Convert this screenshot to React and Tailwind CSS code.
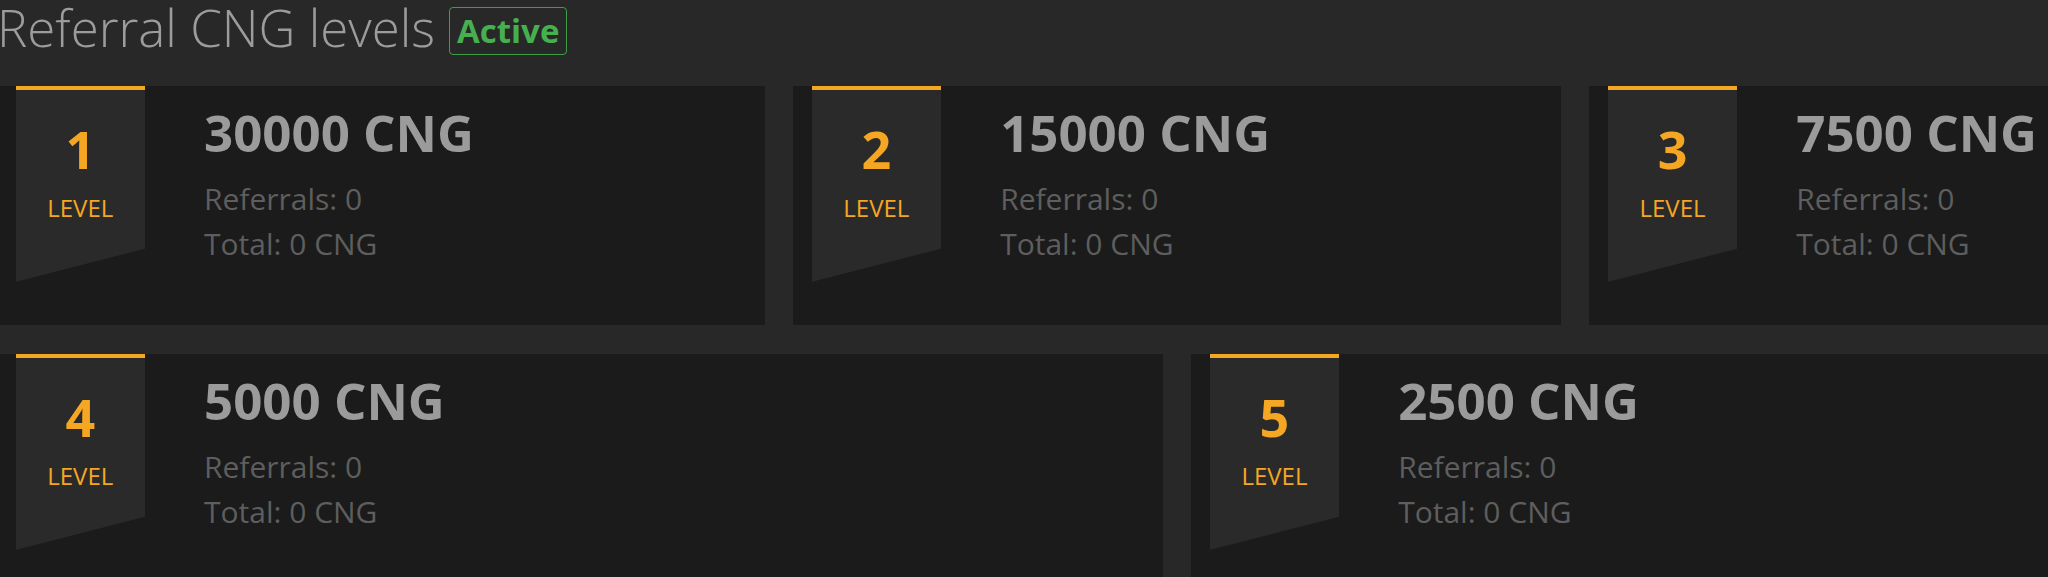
import React from 'react'

const levels = [
  { level: 1, amount: '30000 CNG', span: 'col-span-2' },
  { level: 2, amount: '15000 CNG', span: 'col-span-2' },
  { level: 3, amount: '7500 CNG', span: 'col-span-2' },
  { level: 4, amount: '5000 CNG', span: 'col-span-3' },
  { level: 5, amount: '2500 CNG', span: 'col-span-3' },
]

function LevelCard({ level, amount, span }) {
  return (
    <section className={`${span} h-[239px] bg-[#1b1b1b] flex pl-[18.5px]`}>
      <div className="w-[129.5px] h-[196px] shrink-0 bg-[#2a2a2a] border-t-4 border-[#f5a623] flex flex-col items-center pt-[33px] [clip-path:polygon(0_0,100%_0,100%_83%,0_100%)]">
        <span className="text-[52px] leading-[52px] font-bold text-[#f5a623]">{level}</span>
        <span className="mt-[21px] text-[24px] leading-[24px] text-[#f5a623]">LEVEL</span>
      </div>
      <div className="ml-[59px] pt-[21px]">
        <h3 className="text-[51px] leading-[51px] font-bold text-[#9b9b9b] whitespace-nowrap">{amount}</h3>
        <div className="mt-[18px] text-[30px] leading-[45px] text-[#5e5e5e] whitespace-nowrap">
          <p>Referrals: 0</p>
          <p>Total: 0 CNG</p>
        </div>
      </div>
    </section>
  )
}

export default function App() {
  return (
    <div className="w-full h-[577px] overflow-hidden bg-[#282828] font-['Open_Sans','Noto_Sans',sans-serif]">
      <div className="w-[2360px] -ml-[3px]">
        <header className="h-[86px] flex items-start">
          <h2 className="mt-[1.5px] text-[51px] leading-[51px] font-light text-[#9c9c9c] whitespace-nowrap">
            Referral CNG levels
          </h2>
          <span className="ml-[14px] mt-[6.5px] h-[48.5px] px-[7px] border-[1.5px] border-[#3d9e48] rounded-[4px] text-[33px] leading-[45px] font-bold text-[#46b050]">
            Active
          </span>
        </header>

        <div className="grid grid-cols-6 gap-x-[28.4px] gap-y-[29px]">
          {levels.map((l) => (
            <LevelCard key={l.level} {...l} />
          ))}
        </div>
      </div>
    </div>
  )
}
